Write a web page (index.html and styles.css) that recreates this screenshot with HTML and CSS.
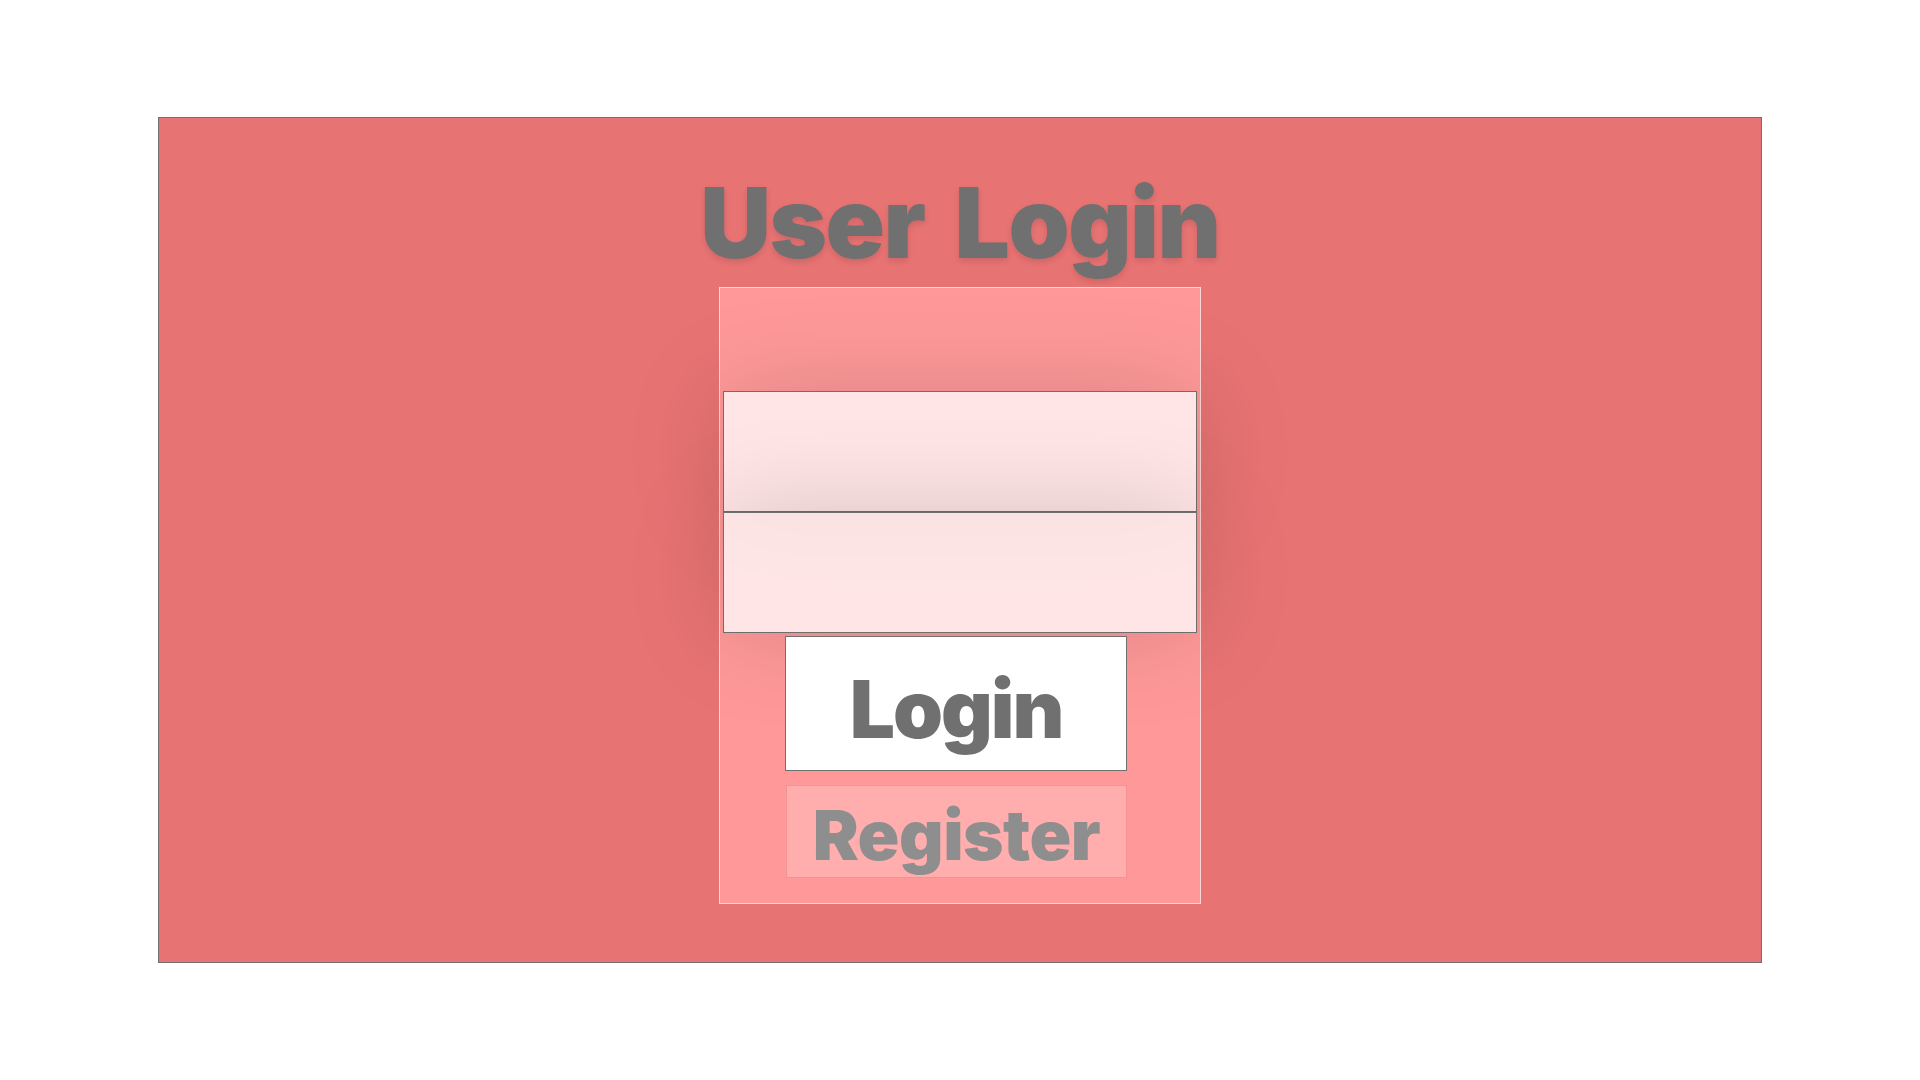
FILE: index.html
```html
<!DOCTYPE html>
<html lang="en">
<head>
<meta charset="utf-8">
<title>User Login</title>
<link rel="stylesheet" href="styles.css">
</head>
<body>
<div class="stage">
  <h1 class="title">User Login</h1>
  <form class="panel">
    <input class="field field-user" type="text" aria-label="Username">
    <input class="field field-pass" type="password" aria-label="Password">
    <button class="btn-login" type="button">Login</button>
    <button class="btn-register" type="button">Register</button>
  </form>
</div>
</body>
</html>
```
FILE: styles.css
```css
html, body {
  margin: 0;
  padding: 0;
  background: #ffffff;
}

body {
  font-family: "Inter", "Open Sans", sans-serif;
}

.stage {
  box-sizing: border-box;
  margin: 117px 158px 0;
  height: 846px;
  background: #e87373;
  border: 1px solid #707070;
  display: flex;
  flex-direction: column;
  align-items: center;
  overflow: hidden;
}

.title {
  margin: 56px 0 15px;
  font-size: 98px;
  line-height: 98px;
  font-weight: 900;
  color: #707070;
  letter-spacing: -1.5px;
  word-spacing: 12px;
  text-shadow: 0 3px 6px rgba(0, 0, 0, 0.12);
}

.panel {
  box-sizing: border-box;
  width: 482px;
  height: 617px;
  margin: 0;
  padding: 103px 3px 25px;
  background: #ff9999;
  border: 1px solid rgba(255, 255, 255, 0.6);
  display: flex;
  flex-direction: column;
  align-items: flex-start;
}

.field {
  box-sizing: border-box;
  display: block;
  width: 474px;
  height: 121px;
  margin: 0;
  padding: 0 16px;
  border: 1px solid #6e6e6e;
  background: rgba(255, 255, 255, 0.75);
  box-shadow: 0 0 100px rgba(0, 0, 0, 0.15);
  position: relative;
  font-family: inherit;
  font-size: 32px;
  outline: none;
}

.btn-login {
  box-sizing: border-box;
  width: 342px;
  height: 135px;
  margin: 3px 0 0 62px;
  padding: 11px 0 0;
  background: #ffffff;
  border: 1px solid #707070;
  position: relative;
  font-family: inherit;
  font-size: 80px;
  font-weight: 900;
  line-height: 1;
  letter-spacing: -2px;
  color: #707070;
}

.btn-register {
  box-sizing: border-box;
  width: 341px;
  height: 93px;
  margin: 14px 0 0 63px;
  padding: 8px 0 0;
  background: rgba(255, 255, 255, 0.2);
  border: 1px solid rgba(220, 100, 100, 0.35);
  font-family: inherit;
  font-size: 69px;
  font-weight: 900;
  line-height: 1;
  letter-spacing: -0.5px;
  color: #8e8e8e;
}
```
